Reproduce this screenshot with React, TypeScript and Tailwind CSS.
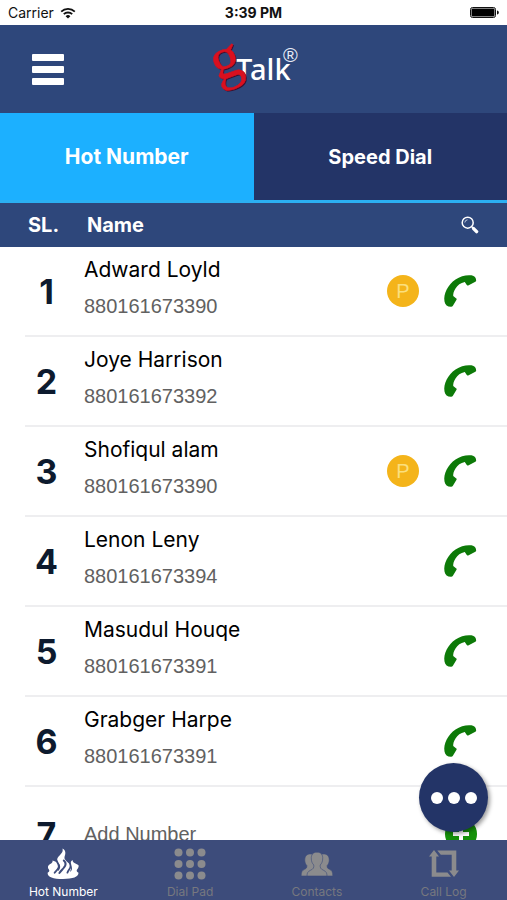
const contacts = [
  { name: "Adward Loyld", number: "880161673390", premium: true },
  { name: "Joye Harrison", number: "880161673392", premium: false },
  { name: "Shofiqul alam", number: "880161673390", premium: true },
  { name: "Lenon Leny", number: "880161673394", premium: false },
  { name: "Masudul Houqe", number: "880161673391", premium: false },
  { name: "Grabger Harpe", number: "880161673391", premium: false },
];

function WifiIcon() {
  return (
    <svg width="16" height="12" viewBox="0 0 16 12" fill="none" stroke="#111" strokeWidth="1.8">
      <path d="M1.2 4.6a9.6 9.6 0 0 1 13.6 0" />
      <path d="M3.8 7.2a6 6 0 0 1 8.4 0" />
      <path d="M8 11.6 5.6 9.2a3.4 3.4 0 0 1 4.8 0Z" fill="#111" stroke="none" />
    </svg>
  );
}

function BatteryIcon() {
  return (
    <svg width="29" height="11" viewBox="0 0 29 11">
      <rect x="0.5" y="0.5" width="25" height="10" rx="2" fill="#fff" stroke="#111" />
      <rect x="1.5" y="1.5" width="23" height="8" rx="1" fill="#000" />
      <path d="M27 3.5c1.3.3 1.8 1 1.8 2s-.5 1.7-1.8 2Z" fill="#111" />
    </svg>
  );
}

function Logo() {
  return (
    <svg width="92" height="64" viewBox="0 0 92 64" className="overflow-visible" role="img" aria-label="gTalk">
      <text x="29" y="43" fontFamily="'Noto Sans', sans-serif" fontWeight="500" fontSize="29" fill="#fff">
        Talk
      </text>
      <g fontFamily="'Liberation Serif', serif" fontSize="60">
        <text x="8" y="41" fill="#3b1030" transform="rotate(-20 23 34)">g</text>
        <text x="7" y="40" fill="#d9101f" stroke="#d9101f" strokeWidth="0.5" transform="rotate(-20 22 33)">g</text>
      </g>
      <text x="76" y="25" fontFamily="'Liberation Sans', sans-serif" fontSize="20" fill="#e8ecf6">
        ®
      </text>
    </svg>
  );
}

function SearchIcon() {
  return (
    <svg width="18" height="18" viewBox="0 0 18 18" fill="none">
      <circle cx="6.7" cy="6.7" r="5.5" stroke="#fff" strokeWidth="1.5" />
      <path d="M3.8 6.5a3 3 0 0 1 2.7-2.7" stroke="#c3cde2" strokeWidth="1" />
      <path d="m10.8 10.8 1.5 1.5" stroke="#fff" strokeWidth="1.5" />
      <path d="m12.6 12.6 3 3" stroke="#fff" strokeWidth="3.4" strokeLinecap="round" />
    </svg>
  );
}

function PhoneIcon() {
  return (
    <svg width="34" height="34" viewBox="0 0 34 34" fill="#0d7a08">
      <path d="M1.5 27.5C.2 20 5 10.5 12.500 5.500 17.500 2 23.500.6 28.500 1.300c3 .4 4.800 2.700 4.700 5.200-.1.800-.6 1.300-1.300 1.600l-6.700 3.300c-.8.300-1.300.1-1.600-.6l-1.800-2.800c-4.300.8-7.200 3.200-9.300 6.500-1.700 2.500-2.400 5.100-2.300 7.600l2.800 2.100c.7.400.8 1 .5 1.600l-3.600 5.900c-.4.700-1 1-1.800 1.100-3.600.1-6-1.900-6.600-5.300Z" />
    </svg>
  );
}

function AddIcon() {
  return (
    <svg width="32" height="32" viewBox="0 0 32 32">
      <circle cx="16" cy="16" r="16" fill="#159109" />
      <path d="M16 8v16M8 16h16" stroke="#fff" strokeWidth="4" />
    </svg>
  );
}

function FireIcon() {
  return (
    <svg width="32" height="32" viewBox="0 0 32 32" fill="#fff">
      <path d="M5.500 12.500c.4 1.800-.6 2.600-2.300 3.500-2.600 1.600-2.800 3.500-1.300 5.600.9 1.400.3 2.300-1.300 3.200C.5 29 6 31 16 31s15.500-2 15.500-6.200c-1.600-.9-2.300-1.900-1.400-3.200 1.300-1.900 2-3.400 1.200-4.600l-3.800-2.100c-1.500-.9-2-1.600-1.800-3-2.600 1.900-3.100 3.600-1.500 6 1.500 2.500.7 4.500-1.200 5.900h-9.600c-3-1.200-3.700-2.600-2.300-4.900C12.600 16.500 11 14 5.500 12.500Z" />
      <path d="M15.500.5c.8 3.400-1 5-3.200 7.200-2.800 2.700-2.800 5-.3 8 1.500 2 1.800 4-.5 7l-1.500 4h11c3-4 4.500-8 1.300-11-1.600-1.800-4.300-3.300-4.800-5.200-.4-2 1.200-3.800.8-6.200C18 2.500 17.200 1.500 15.500.5Z" />
      <g fill="none" stroke="#3d4c7b" strokeLinecap="round">
        <path d="M9 11c.2 3 3.600 4.700 2.800 8.200-.6 2.300-2.800 3.400-4.200 5.500" strokeWidth="1.800" />
        <path d="M16.800 12.500c2.400 2.300 2.200 4.700.2 7-1.500 1.900-3 3.300-4.600 5.500" strokeWidth="2" />
        <path d="M22.500 12.500c-.3 2.500 1.800 4 .9 6.700-.7 2-2.400 3.300-3 5.500" strokeWidth="1.800" />
      </g>
    </svg>
  );
}

function DialPadIcon() {
  return (
    <svg width="32" height="32" viewBox="0 0 32 32" fill="#8b8b8d">
      {[4.5, 16, 27.5].map((cy) =>
        [4.5, 16, 27.5].map((cx) => <circle key={`${cx}-${cy}`} cx={cx} cy={cy} r="4" />)
      )}
    </svg>
  );
}

function ContactsIcon() {
  return (
    <svg width="32" height="32" viewBox="0 0 32 32" fill="#8b8b8d" stroke="#3d4c7b" strokeWidth="0.6">
      <path d="M10.500 6C6 5.500 3.600 8 3.800 12.500c.1 2 .8 3.700 2 4.900.3 2.300-.5 3.100-2.300 3.900C1 22.500.2 24 .2 28H16V8Z" />
      <path d="M21.500 6c4.500-.5 6.900 2 6.700 6.500-.1 2-.8 3.700-2 4.900-.3 2.300.5 3.100 2.300 3.900 2.500 1.200 3.300 2.700 3.300 6.700H16V8Z" />
      <path d="M16 4.200c-4.200 0-6 2.700-5.700 6.800.1 2.500 1 4.500 2.500 6 .3 2.700-.6 4-3 5.100C6.800 23.400 6 25 6 28h20c0-3-.8-4.600-3.800-5.900-2.400-1.100-3.300-2.400-3-5.100 1.500-1.500 2.400-3.500 2.500-6 .3-4.100-1.500-6.800-5.700-6.800Z" />
    </svg>
  );
}

function CallLogIcon() {
  return (
    <svg width="32" height="32" viewBox="0 0 32 32" fill="#8b8b8d">
      <path d="M6 2 11 8.500H8.300v16h11.200l3.500 4.300H3.700V8.500H1Z" />
      <path d="M9.300 2.500h19v20h2.700L26 29l-5-6.500h2.700V6.800H12.800Z" />
    </svg>
  );
}

const tabs = [
  { label: "Hot Number", icon: <FireIcon />, active: true },
  { label: "Dial Pad", icon: <DialPadIcon />, active: false },
  { label: "Contacts", icon: <ContactsIcon />, active: false },
  { label: "Call Log", icon: <CallLogIcon />, active: false },
];

export default function App() {
  return (
    <div className="flex h-screen flex-col overflow-hidden bg-white font-['Inter',sans-serif]">
      <div className="grid h-[25px] shrink-0 grid-cols-3 items-center px-2 text-[14px] text-[#111]">
        <div className="flex items-center gap-1.5">
          Carrier
          <WifiIcon />
        </div>
        <div className="text-center font-bold">3:39 PM</div>
        <div className="flex justify-end">
          <BatteryIcon />
        </div>
      </div>

      <header className="grid h-22 shrink-0 grid-cols-3 items-center bg-[#2e477b] px-8">
        <button aria-label="Menu" className="flex w-8 flex-col gap-[5px]">
          <span className="h-[7px] w-full rounded-[1px] bg-white" />
          <span className="h-[7px] w-full rounded-[1px] bg-white" />
          <span className="h-[7px] w-full rounded-[1px] bg-white" />
        </button>
        <div className="flex justify-center">
          <Logo />
        </div>
      </header>

      <div className="grid h-[90px] shrink-0 grid-cols-2 border-b-3 border-[#2bb0f3] font-bold text-white">
        <button className="bg-[#1cb0ff] text-[21px]">Hot Number</button>
        <button className="bg-[#233467] text-[20px]">Speed Dial</button>
      </div>

      <main className="relative min-h-0 flex-1">
        <div className="h-full overflow-hidden">
          <table className="w-full table-fixed border-collapse">
            <thead className="bg-[#2e477b] text-left text-[20px] text-white">
              <tr className="h-11">
                <th className="w-[84px] pl-7 font-bold">SL.</th>
                <th className="pl-[3px] font-bold">Name</th>
                <th className="w-[124px] pr-7">
                  <button aria-label="Search" className="ml-auto block">
                    <SearchIcon />
                  </button>
                </th>
              </tr>
            </thead>
            <tbody>
              {contacts.map((contact, i) => (
                <tr key={contact.name}>
                  <td className="p-0 pl-[25px]">
                    <div className="flex h-[90px] items-center justify-center border-b-2 border-[#eeeef0] pr-4 text-[34px] font-bold text-[#0d1a2e]">
                      {i + 1}
                    </div>
                  </td>
                  <td className="p-0">
                    <div className="flex h-[90px] flex-col justify-center gap-2 border-b-2 border-[#eeeef0] pb-1.5">
                      <div className="text-[21px] leading-7 text-black">{contact.name}</div>
                      <div className="font-['Liberation_Sans',sans-serif] text-[20px] leading-7 text-[#616161]">
                        {contact.number}
                      </div>
                    </div>
                  </td>
                  <td className="p-0">
                    <div className="flex h-[90px] items-center justify-end gap-6 border-b-2 border-[#eeeef0] pr-[30px]">
                      {contact.premium && (
                        <span className="flex size-8 items-center justify-center rounded-full bg-[#f4b41a] font-['Liberation_Sans',sans-serif] text-[20px] text-[#fbdf7d]">
                          P
                        </span>
                      )}
                      <button aria-label={`Call ${contact.name}`}>
                        <PhoneIcon />
                      </button>
                    </div>
                  </td>
                </tr>
              ))}
              <tr>
                <td className="p-0 pl-[25px]">
                  <div className="flex h-[94px] items-center justify-center pr-4 text-[34px] font-bold text-[#0d1a2e]">
                    7
                  </div>
                </td>
                <td className="p-0 font-['Liberation_Sans',sans-serif] text-[20px] text-[#616161]">
                  Add Number
                </td>
                <td className="p-0">
                  <button aria-label="Add Number" className="mr-[30px] ml-auto block">
                    <AddIcon />
                  </button>
                </td>
              </tr>
            </tbody>
          </table>
        </div>
        <button
          aria-label="More"
          className="absolute right-[19px] bottom-2 flex size-[69px] items-center justify-center gap-[5px] rounded-full bg-[#233467] shadow-[2px_2px_4px_rgba(0,0,0,0.4)]"
        >
          <span className="size-3 rounded-full bg-white" />
          <span className="size-3 rounded-full bg-white" />
          <span className="size-3 rounded-full bg-white" />
        </button>
      </main>

      <nav className="grid h-15 shrink-0 grid-cols-4 bg-[#3d4c7b] text-[12px]">
        {tabs.map((tab) => (
          <button
            key={tab.label}
            className={`flex flex-col items-center gap-1 pt-2 leading-4 ${tab.active ? "text-white" : "text-[#77787f]"}`}
          >
            {tab.icon}
            {tab.label}
          </button>
        ))}
      </nav>
    </div>
  );
}
